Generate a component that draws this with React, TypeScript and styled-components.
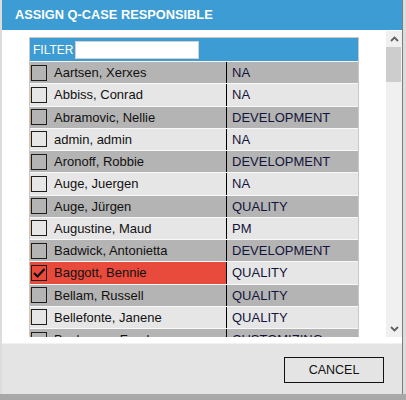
import React from "react";
import styled, { createGlobalStyle } from "styled-components";

const Global = createGlobalStyle`
  html, body { margin: 0; padding: 0; background: #a8a8a8; }
  body { font-family: "Liberation Sans", Arial, sans-serif; }
`;

const Page = styled.div`
  background: #dcdcdc;
  height: 394px;
  padding-left: 2px;
  box-sizing: border-box;
  overflow: hidden;
`;

const Dialog = styled.div`
  width: 400px;
  height: 394px;
  display: flex;
  flex-direction: column;
  border-right: 1px solid #7d7d7d;
  background: #fff;
`;

const Header = styled.div`
  height: 30px;
  flex: none;
  background: #3d9cd3;
  color: #fff;
  font-weight: bold;
  font-size: 12.8px;
  line-height: 30px;
  padding-left: 13px;
`;

const Body = styled.div`
  height: 313px;
  flex: none;
  background: #fff;
  padding-top: 1px;
  box-sizing: border-box;
`;

const ScrollArea = styled.div`
  display: flex;
  height: 306px;
`;

const Content = styled.div`
  flex: 1;
  overflow: hidden;
  padding: 6px 0 0 27px;
`;

const ListPanel = styled.div`
  width: 330px;
  border: 1px solid #c8c8c8;
  border-bottom: none;
  box-sizing: border-box;
`;

const FilterBar = styled.div`
  height: 23px;
  background: #3d9cd3;
  display: flex;
  align-items: center;
  gap: 2px;
  padding-left: 3px;
  border-bottom: 1px solid #f4f4f4;
`;

const FilterLabel = styled.span`
  color: #fff;
  font-size: 12px;
`;

const FilterInput = styled.input`
  width: 124px;
  height: 18px;
  box-sizing: border-box;
  border: 1px solid #d0d0d0;
  background: #fff;
  padding: 0;
  margin: 0;
  outline: none;
`;

const Row = styled.div<{ $alt: boolean }>`
  display: flex;
  height: 22.25px;
  box-sizing: border-box;
  border-bottom: 1px solid #f8f8f8;
  background: ${(p) => (p.$alt ? "#e6e6e6" : "#b4b4b4")};
  font-size: 13px;
  color: #111;
`;

const NameCell = styled.div<{ $selected: boolean }>`
  width: 195px;
  display: flex;
  align-items: center;
  padding-left: 1px;
  gap: 7px;
  background: ${(p) => (p.$selected ? "#e84b3c" : "transparent")};
  border-right: 1px solid #000;
`;

const DeptCell = styled.div`
  flex: 1;
  display: flex;
  align-items: center;
  padding-left: 5px;
  color: #14143a;
`;

const Check = styled.span`
  width: 16px;
  height: 16px;
  box-sizing: border-box;
  border: 1px solid #1e1e1e;
  box-shadow: -1px 0 0 0 rgba(220, 140, 40, 0.35);
  display: flex;
  align-items: center;
  justify-content: center;
  flex: none;
`;

const Scrollbar = styled.div`
  width: 16px;
  flex: none;
  background: #f0f0f0;
  display: flex;
  flex-direction: column;
`;

const ArrowBtn = styled.div`
  height: 16px;
  flex: none;
  display: flex;
  align-items: center;
  justify-content: center;
`;

const Thumb = styled.div`
  height: 35px;
  width: 15px;
  background: #cdcdcd;
  flex: none;
`;

const Track = styled.div`
  flex: 1;
`;

const Footer = styled.div`
  height: 51px;
  flex: none;
  background: #e4e4e4;
  display: flex;
  align-items: center;
  justify-content: flex-end;
  padding-right: 18px;
  border-top: 1px solid #f2f2f2;
  box-sizing: border-box;
`;

const CancelButton = styled.button`
  width: 100px;
  height: 26px;
  border: 1px solid #111;
  background: transparent;
  font-family: "Liberation Sans", Arial, sans-serif;
  font-size: 12.5px;
  color: #111;
  padding: 0;
  margin-top: 1px;
`;

type Person = { name: string; dept: string; checked?: boolean };

const people: Person[] = [
  { name: "Aartsen, Xerxes", dept: "NA" },
  { name: "Abbiss, Conrad", dept: "NA" },
  { name: "Abramovic, Nellie", dept: "DEVELOPMENT" },
  { name: "admin, admin", dept: "NA" },
  { name: "Aronoff, Robbie", dept: "DEVELOPMENT" },
  { name: "Auge, Juergen", dept: "NA" },
  { name: "Auge, Jürgen", dept: "QUALITY" },
  { name: "Augustine, Maud", dept: "PM" },
  { name: "Badwick, Antonietta", dept: "DEVELOPMENT" },
  { name: "Baggott, Bennie", dept: "QUALITY", checked: true },
  { name: "Bellam, Russell", dept: "QUALITY" },
  { name: "Bellefonte, Janene", dept: "QUALITY" },
  { name: "Buchanan, Frank", dept: "CUSTOMIZING" },
];

const Chevron = ({ up }: { up: boolean }) => (
  <svg width="9" height="6" viewBox="0 0 9 6">
    <polyline
      points={up ? "1,5 4.5,1.5 8,5" : "1,1 4.5,4.5 8,1"}
      fill="none"
      stroke="#5f5f5f"
      strokeWidth="1.8"
    />
  </svg>
);

export default function App() {
  return (
    <>
      <Global />
      <Page>
        <Dialog>
          <Header>ASSIGN Q-CASE RESPONSIBLE</Header>
          <Body>
            <ScrollArea>
              <Content>
                <ListPanel>
                  <FilterBar>
                    <FilterLabel>FILTER</FilterLabel>
                    <FilterInput type="text" />
                  </FilterBar>
                  {people.map((p, i) => (
                    <Row key={p.name} $alt={i % 2 === 1}>
                      <NameCell $selected={!!p.checked}>
                        <Check>
                          {p.checked && (
                            <svg width="13" height="12" viewBox="0 0 13 12">
                              <polyline
                                points="1,6 4.5,9.5 11.5,2"
                                fill="none"
                                stroke="#111"
                                strokeWidth="2.2"
                              />
                            </svg>
                          )}
                        </Check>
                        {p.name}
                      </NameCell>
                      <DeptCell>{p.dept}</DeptCell>
                    </Row>
                  ))}
                </ListPanel>
              </Content>
              <Scrollbar>
                <ArrowBtn>
                  <Chevron up />
                </ArrowBtn>
                <Thumb />
                <Track />
                <ArrowBtn>
                  <Chevron up={false} />
                </ArrowBtn>
              </Scrollbar>
            </ScrollArea>
          </Body>
          <Footer>
            <CancelButton>CANCEL</CancelButton>
          </Footer>
        </Dialog>
      </Page>
    </>
  );
}
